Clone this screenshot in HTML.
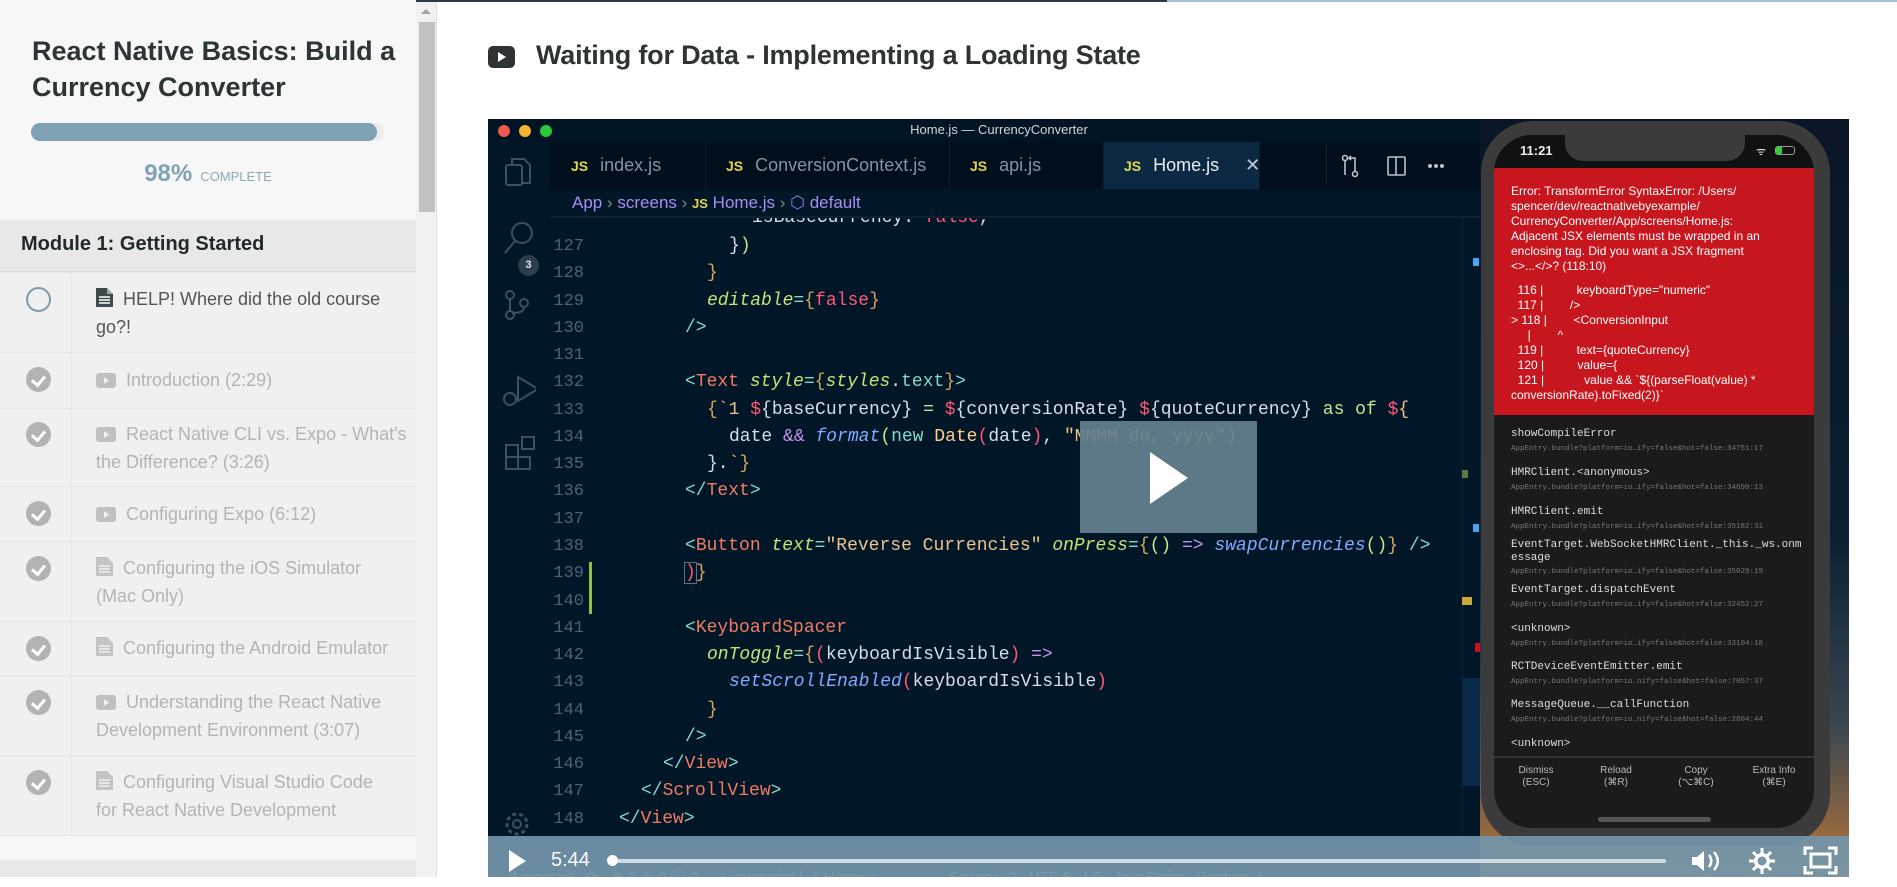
<!DOCTYPE html>
<html><head><meta charset="utf-8">
<style>
*{margin:0;padding:0;box-sizing:border-box}
body{width:1897px;height:877px;overflow:hidden;background:#fff;font-family:"Liberation Sans",sans-serif;position:relative}
.abs{position:absolute}
#side{left:0;top:0;width:416px;height:877px;background:#f7f7f7}
.row{position:absolute;left:0;width:416px;background:#f0f0f0;border-top:1px solid #e6e6e6}
.row .div{position:absolute;left:71px;top:0;bottom:0;width:1px;background:#e6e6e6}
.row .t{position:absolute;left:96px;right:16px;font-size:18px;line-height:28px;color:#b4b4b4}
.chk{position:absolute;left:26px;width:25px;height:25px;border-radius:50%;background:#b3b3b3}
.chk:after{content:"";position:absolute;left:8px;top:6px;width:6px;height:10px;border:solid #fff;border-width:0 3px 3px 0;transform:rotate(40deg)}
.ic{display:inline-block;vertical-align:-2px;margin-right:10px}
.code{position:absolute;left:0;font-family:"Liberation Mono",monospace;font-size:18px;line-height:27px;color:#d6deeb;white-space:pre}
.ln{position:absolute;left:548px;width:36px;text-align:right;font-family:"Liberation Mono",monospace;font-size:17px;color:#4b6479;line-height:27px}
.tg{color:#7fdbca}.tn{color:#f07b62}.at{color:#c5e478;font-style:italic}.br{color:#d9a55b}.fa{color:#ff5874}.fn{color:#82aaff;font-style:italic}.kw{color:#7fdbca}.ty{color:#ffcb8b}.st{color:#ecc48d}.pu{color:#c792ea}.dl{color:#ff5874}.gr{color:#c3e88d}
.tab{position:absolute;top:142px;height:47px;font-size:18px;color:#7f95a6;line-height:47px;padding-left:20px;border-right:1px solid #0b1c2e}
.tab b{color:#e5d34a;font-size:14px;margin-right:12px;font-weight:bold}
.red div{white-space:pre}
.st1{font-family:"Liberation Mono",monospace;font-size:11px;color:#ddd;position:absolute;left:1511px;white-space:nowrap}
.st2{font-family:"Liberation Mono",monospace;font-size:7.5px;color:#777;position:absolute;left:1511px;white-space:nowrap}
</style></head><body>
<div class="abs" style="left:0;top:0;width:1167px;height:2px;background:#2c3b40"></div>
<div class="abs" style="left:1167px;top:0;width:730px;height:2px;background:#a8c0cd"></div>

<div id="side" class="abs">
  <div class="abs" style="left:32px;top:33px;width:385px;font-size:27px;font-weight:bold;line-height:36px;color:#2b3538">React Native Basics: Build a Currency Converter</div>
  <div class="abs" style="left:31px;top:123px;width:353px;height:18px;border-radius:9px;background:#ececec"></div>
  <div class="abs" style="left:31px;top:123px;width:346px;height:18px;border-radius:9px;background:#7ea1b4"></div>
  <div class="abs" style="left:0;top:160px;width:416px;text-align:center;color:#7fa2b5"><span style="font-size:24px;font-weight:bold">98%</span> <span style="font-size:13px;color:#8ea9b8">&nbsp;COMPLETE</span></div>
  <div class="abs" style="left:0;top:220px;width:416px;height:52px;background:#e8e8e8;border-bottom:1px solid #dcdcdc"></div>
  <div class="abs" style="left:21px;top:233px;font-size:20px;font-weight:bold;color:#1f2a2e">Module 1: Getting Started</div>

  <div class="row" style="top:272px;height:80px"><div class="div"></div>
    <div class="abs" style="left:26px;top:14px;width:25px;height:25px;border-radius:50%;border:2px solid #7a9cb0"></div>
    <div class="t" style="top:12px;color:#555"><svg class="ic" width="17" height="19" viewBox="0 0 17 19"><path d="M0 0h11l6 6v13H0z" fill="#3e4a4d"/><path d="M11 0v6h6" fill="#9aa"/><path d="M3 9h11M3 12h11M3 15h11" stroke="#fff" stroke-width="1.5"/></svg>HELP! Where did the old course go?!</div></div>
  <div class="row" style="top:352px;height:56px"><div class="div"></div><div class="chk" style="top:14px"></div>
    <div class="t" style="top:13px"><svg class="ic" width="20" height="15" viewBox="0 0 20 15"><rect width="20" height="15" rx="3" fill="#c0c0c0"/><path d="M8 4l5 3.5L8 11z" fill="#f0f0f0"/></svg>Introduction (2:29)</div></div>
  <div class="row" style="top:408px;height:78px"><div class="div"></div><div class="chk" style="top:13px"></div>
    <div class="t" style="top:11px;right:4px"><svg class="ic" width="20" height="15" viewBox="0 0 20 15"><rect width="20" height="15" rx="3" fill="#c0c0c0"/><path d="M8 4l5 3.5L8 11z" fill="#f0f0f0"/></svg>React Native CLI vs. Expo - What's the Difference? (3:26)</div></div>
  <div class="row" style="top:486px;height:55px"><div class="div"></div><div class="chk" style="top:14px"></div>
    <div class="t" style="top:13px"><svg class="ic" width="20" height="15" viewBox="0 0 20 15"><rect width="20" height="15" rx="3" fill="#c0c0c0"/><path d="M8 4l5 3.5L8 11z" fill="#f0f0f0"/></svg>Configuring Expo (6:12)</div></div>
  <div class="row" style="top:541px;height:80px"><div class="div"></div><div class="chk" style="top:14px"></div>
    <div class="t" style="top:12px"><svg class="ic" width="17" height="19" viewBox="0 0 17 19"><path d="M0 0h11l6 6v13H0z" fill="#c4c4c4"/><path d="M3 9h11M3 12h11M3 15h11" stroke="#f0f0f0" stroke-width="1.5"/></svg>Configuring the iOS Simulator<br>(Mac Only)</div></div>
  <div class="row" style="top:621px;height:54px"><div class="div"></div><div class="chk" style="top:14px"></div>
    <div class="t" style="top:12px;right:0;white-space:nowrap"><svg class="ic" width="17" height="19" viewBox="0 0 17 19"><path d="M0 0h11l6 6v13H0z" fill="#c4c4c4"/><path d="M3 9h11M3 12h11M3 15h11" stroke="#f0f0f0" stroke-width="1.5"/></svg>Configuring the Android Emulator</div></div>
  <div class="row" style="top:675px;height:80px"><div class="div"></div><div class="chk" style="top:14px"></div>
    <div class="t" style="top:12px"><svg class="ic" width="20" height="15" viewBox="0 0 20 15"><rect width="20" height="15" rx="3" fill="#c0c0c0"/><path d="M8 4l5 3.5L8 11z" fill="#f0f0f0"/></svg>Understanding the React Native Development Environment (3:07)</div></div>
  <div class="row" style="top:755px;height:80px"><div class="div"></div><div class="chk" style="top:14px"></div>
    <div class="t" style="top:12px"><svg class="ic" width="17" height="19" viewBox="0 0 17 19"><path d="M0 0h11l6 6v13H0z" fill="#c4c4c4"/><path d="M3 9h11M3 12h11M3 15h11" stroke="#f0f0f0" stroke-width="1.5"/></svg>Configuring Visual Studio Code<br>for React Native Development</div></div>
  <div class="abs" style="left:0;top:835px;width:416px;height:25px;background:#f7f7f7;border-top:1px solid #e6e6e6"></div>
  <div class="abs" style="left:0;top:860px;width:416px;height:17px;background:#e8e8e8"></div>
</div>
<div class="abs" style="left:416px;top:2px;width:21px;height:875px;background:#f1f1f1;border-right:1px solid #dedede"></div>
<div class="abs" style="left:419px;top:22px;width:16px;height:190px;background:#c1c1c1"></div>
<div class="abs" style="left:421px;top:9px;width:0;height:0;border-left:5px solid transparent;border-right:5px solid transparent;border-bottom:5px solid #a3a3a3"></div>

<svg class="abs" style="left:488px;top:46px" width="27" height="22" viewBox="0 0 27 22"><rect width="27" height="22" rx="5" fill="#2e3436"/><path d="M10 6l8 5-8 5z" fill="#fff"/></svg>
<div class="abs" style="left:536px;top:40px;font-size:27px;font-weight:bold;color:#2e3436;letter-spacing:-0.2px">Waiting for Data - Implementing a Loading State</div>

<div class="abs" style="left:488px;top:119px;width:1361px;height:758px;background:linear-gradient(#0a1626 0%,#0d1f33 55%,#3a4650 80%,#b87638 100%);overflow:hidden"></div>
<div class="abs" style="left:488px;top:119px;width:992px;height:758px;background:#011627;overflow:hidden">
  <div class="abs" style="left:0;top:0;width:992px;height:23px;background:#011424"></div>
  <div class="abs" style="left:10px;top:6px;width:12px;height:12px;border-radius:50%;background:#ee5a52"></div>
  <div class="abs" style="left:31px;top:6px;width:12px;height:12px;border-radius:50%;background:#f3b330"></div>
  <div class="abs" style="left:52px;top:6px;width:12px;height:12px;border-radius:50%;background:#2cc73f"></div>
  <div class="abs" style="left:0;top:3px;width:992px;text-align:center;font-size:13px;color:#cfd6dc;padding-left:30px">Home.js — CurrencyConverter</div>
  <svg class="abs" style="left:14px;top:36px" width="34" height="560" viewBox="0 0 34 560" fill="none" stroke="#3b5064" stroke-width="2">
    <rect x="4" y="10" width="16" height="20" rx="2"/><path d="M10 10V4h12l6 6v18H20"/>
    <circle cx="20" cy="78" r="10"/><path d="M13 86L3 98"/>
    <circle cx="8" cy="140" r="4"/><circle cx="8" cy="160" r="4"/><circle cx="22" cy="148" r="4"/><path d="M8 144v12M22 152c0 6-8 6-12 6"/>
    <path d="M16 222l20 12-20 12z"/><circle cx="8" cy="244" r="6"/>
    <rect x="4" y="290" width="12" height="12"/><rect x="16" y="302" width="12" height="12"/><rect x="4" y="302" width="12" height="12"/><rect x="20" y="282" width="12" height="12"/>
  </svg>
  <div class="abs" style="left:30px;top:136px;width:21px;height:21px;border-radius:50%;background:#2d3d4c;color:#e0e6ea;font-size:11px;font-weight:bold;text-align:center;line-height:21px">3</div>
  <svg class="abs" style="left:14px;top:690px" width="30" height="30" viewBox="0 0 30 30"><circle cx="15" cy="15" r="10" fill="none" stroke="#3b5064" stroke-width="3" stroke-dasharray="4 3"/><circle cx="15" cy="15" r="4" fill="none" stroke="#3b5064" stroke-width="2"/></svg>
  <div class="abs" style="left:62px;top:23px;width:930px;height:47px;background:#010f1c"></div>
  <div class="tab" style="left:63px;width:155px;top:23px"><b>JS</b>index.js</div>
  <div class="tab" style="left:218px;width:244px;top:23px"><b>JS</b>ConversionContext.js</div>
  <div class="tab" style="left:462px;width:154px;top:23px"><b>JS</b>api.js</div>
  <div class="tab" style="left:616px;width:156px;top:23px;background:#0b2942;color:#e8edf1"><b>JS</b>Home.js<span style="margin-left:26px;color:#c5ccd2">✕</span></div>
  <div class="abs" style="left:838px;top:25px;width:1px;height:40px;background:#0e2438"></div>
  <svg class="abs" style="left:852px;top:35px" width="110" height="24" viewBox="0 0 110 24" fill="none" stroke="#b8c3cc" stroke-width="1.6"><circle cx="5" cy="4" r="2.5"/><circle cx="15" cy="20" r="2.5"/><path d="M5 7v14M15 17V4H9M11 2l-2 2 2 2"/><rect x="48" y="3" width="17" height="18" rx="1"/><path d="M56 3v18"/><circle cx="90" cy="12" r="1.2" fill="#b8c3cc"/><circle cx="96" cy="12" r="1.2" fill="#b8c3cc"/><circle cx="102" cy="12" r="1.2" fill="#b8c3cc"/></svg>
  <div class="abs" style="left:84px;top:70px;height:27px;font-size:17px;line-height:27px;color:#a48ff0;white-space:nowrap">App <span style="color:#7d8b99">›</span> screens <span style="color:#7d8b99">›</span> <b style="color:#e5d34a;font-size:13px">JS</b> Home.js <span style="color:#7d8b99">›</span> <span style="color:#8b7ee0">⬡</span> default</div>
  <div class="abs" style="left:62px;top:97px;width:930px;height:2px;background:#0f2031"></div>
</div>
<div class="abs" style="left:488px;top:218px;width:992px;height:618px;overflow:hidden">
  <div style="position:absolute;left:-488px;top:-218px;width:1480px;height:900px">
  <div class="ln" style="top:191px;clip-path:inset(14px 0 0 0)">126</div>
  <div class="ln" style="top:233px">127</div><div class="ln" style="top:260px">128</div><div class="ln" style="top:288px">129</div><div class="ln" style="top:315px">130</div><div class="ln" style="top:342px">131</div><div class="ln" style="top:369px">132</div><div class="ln" style="top:397px">133</div><div class="ln" style="top:424px">134</div><div class="ln" style="top:451px">135</div><div class="ln" style="top:478px">136</div><div class="ln" style="top:506px">137</div><div class="ln" style="top:533px">138</div><div class="ln" style="top:560px">139</div><div class="ln" style="top:588px">140</div><div class="ln" style="top:615px">141</div><div class="ln" style="top:642px">142</div><div class="ln" style="top:669px">143</div><div class="ln" style="top:697px">144</div><div class="ln" style="top:724px">145</div><div class="ln" style="top:751px">146</div><div class="ln" style="top:778px">147</div><div class="ln" style="top:806px">148</div>
  <div class="abs" style="left:589px;top:562px;width:3px;height:52px;background:#8bc34a"></div>
  <div class="code" style="left:752px;top:205px">isBaseCurrency: <span class="fa">false</span>,</div>
  <div class="code" style="left:729px;top:233px">}<span class="gr">)</span></div>
  <div class="code" style="left:707px;top:260px"><span class="br">}</span></div>
  <div class="code" style="left:707px;top:288px"><span class="at">editable</span><span class="tg">=</span><span class="br">{</span><span class="fa">false</span><span class="br">}</span></div>
  <div class="code" style="left:685px;top:315px"><span class="tg">/&gt;</span></div>
  <div class="code" style="left:685px;top:369px"><span class="tg">&lt;</span><span class="tn">Text</span> <span class="at">style</span><span class="tg">=</span><span class="br">{</span><span class="at">styles</span>.<span class="kw">text</span><span class="br">}</span><span class="tg">&gt;</span></div>
  <div class="code" style="left:707px;top:397px"><span class="br">{</span><span class="st">`1 </span><span class="dl">$</span>{baseCurrency} <span class="gr">=</span> <span class="dl">$</span>{conversionRate} <span class="dl">$</span>{quoteCurrency} <span class="gr">as of</span> <span class="dl">$</span><span class="st">{</span></div>
  <div class="code" style="left:729px;top:424px">date <span class="pu">&amp;&amp;</span> <span class="fn">format</span><span class="gr">(</span><span class="kw">new</span> <span class="ty">Date</span><span class="fa">(</span>date<span class="fa">)</span>, <span class="st">"MMMM do, yyyy"</span><span class="gr">)</span></div>
  <div class="code" style="left:707px;top:451px">}.<span class="st">`</span><span class="br">}</span></div>
  <div class="code" style="left:685px;top:478px"><span class="tg">&lt;/</span><span class="tn">Text</span><span class="tg">&gt;</span></div>
  <div class="code" style="left:685px;top:533px"><span class="tg">&lt;</span><span class="tn">Button</span> <span class="at">text</span><span class="tg">=</span><span class="st">"Reverse Currencies"</span> <span class="at">onPress</span><span class="tg">=</span><span class="br">{</span><span class="gr">()</span> <span class="pu">=&gt;</span> <span class="fn">swapCurrencies</span><span class="gr">()</span><span class="br">}</span> <span class="tg">/&gt;</span></div>
  <div class="code" style="left:685px;top:560px"><span class="fa" style="outline:1px solid #5a6f84">)</span><span class="br">}</span></div>
  <div class="code" style="left:685px;top:615px"><span class="tg">&lt;</span><span class="tn">KeyboardSpacer</span></div>
  <div class="code" style="left:707px;top:642px"><span class="at">onToggle</span><span class="tg">=</span><span class="br">{</span><span class="fa">(</span>keyboardIsVisible<span class="fa">)</span> <span class="pu">=&gt;</span></div>
  <div class="code" style="left:729px;top:669px"><span class="fn">setScrollEnabled</span><span class="fa">(</span>keyboardIsVisible<span class="fa">)</span></div>
  <div class="code" style="left:707px;top:697px"><span class="br">}</span></div>
  <div class="code" style="left:685px;top:724px"><span class="tg">/&gt;</span></div>
  <div class="code" style="left:663px;top:751px"><span class="tg">&lt;/</span><span class="tn">View</span><span class="tg">&gt;</span></div>
  <div class="code" style="left:641px;top:778px"><span class="tg">&lt;/</span><span class="tn">ScrollView</span><span class="tg">&gt;</span></div>
  <div class="code" style="left:619px;top:806px"><span class="tg">&lt;/</span><span class="tn">View</span><span class="tg">&gt;</span></div>
  <div class="abs" style="left:1462px;top:216px;width:1px;height:620px;background:#0c2236"></div>
  <div class="abs" style="left:1473px;top:258px;width:6px;height:8px;background:#4aa3f0"></div>
  <div class="abs" style="left:1462px;top:470px;width:6px;height:8px;background:#5d7a44"></div>
  <div class="abs" style="left:1473px;top:524px;width:6px;height:8px;background:#4aa3f0"></div>
  <div class="abs" style="left:1462px;top:597px;width:10px;height:8px;background:#c9a93a"></div>
  <div class="abs" style="left:1475px;top:643px;width:5px;height:9px;background:#d01020"></div>
  <div class="abs" style="left:1462px;top:678px;width:18px;height:108px;background:#0a2a4a"></div>
  </div>
</div>
<div class="abs" style="left:1080px;top:421px;width:177px;height:112px;background:rgba(100,128,143,0.93)"></div>
<svg class="abs" style="left:1150px;top:452px" width="40" height="52" viewBox="0 0 40 52"><path d="M0 0l38 26L0 52z" fill="#fff"/></svg>

<div class="abs" style="left:1481px;top:121px;width:349px;height:725px;border-radius:52px;background:#3b3b3b"></div>
<div class="abs" style="left:1494px;top:135px;width:320px;height:693px;border-radius:38px;background:#1b1b1b;overflow:hidden">
  <div class="abs" style="left:0;top:0;width:320px;height:34px;background:#111"></div>
  <div class="abs" style="left:71px;top:-2px;width:180px;height:28px;border-radius:0 0 18px 18px;background:#3b3b3b"></div>
  <div class="abs" style="left:26px;top:8px;color:#eee;font-size:13px;font-weight:bold">11:21</div>
  <div class="abs" style="left:262px;top:9px;color:#eee;font-size:11px">ᯤ</div>
  <div class="abs" style="left:281px;top:11px;width:20px;height:9px;border:1px solid #999;border-radius:3px"><div style="width:6px;height:7px;background:#3c3"></div></div>
  <div class="abs red" style="left:0;top:33px;width:320px;height:247px;background:#c8161f;color:#fff;font-size:12px;line-height:15px;padding:16px 0 0 17px;overflow:hidden">
    <div>Error: TransformError SyntaxError: /Users/</div><div>spencer/dev/reactnativebyexample/</div><div>CurrencyConverter/App/screens/Home.js:</div><div>Adjacent JSX elements must be wrapped in an</div><div>enclosing tag. Did you want a JSX fragment</div><div>&lt;&gt;...&lt;/&gt;? (118:10)</div>
    <div style="margin-top:9px">  116 |          keyboardType="numeric"</div><div>  117 |        /&gt;</div><div>&gt; 118 |        &lt;ConversionInput</div><div>     |        ^</div><div>  119 |          text={quoteCurrency}</div><div>  120 |          value={</div><div>  121 |            value &amp;&amp; `${(parseFloat(value) *</div><div>conversionRate).toFixed(2)}`</div>
  </div>
  <div class="abs" style="left:0;top:621px;width:320px;height:2px;background:#333"></div>
  <div class="abs" style="left:0;top:630px;width:320px;font-size:10px;color:#bbb;text-align:center;line-height:12px">
    <div class="abs" style="left:12px;width:60px">Dismiss<br>(ESC)</div><div class="abs" style="left:92px;width:60px">Reload<br>(⌘R)</div><div class="abs" style="left:172px;width:60px">Copy<br>(⌥⌘C)</div><div class="abs" style="left:250px;width:60px">Extra Info<br>(⌘E)</div>
  </div>
  <div class="abs" style="left:104px;top:682px;width:113px;height:5px;border-radius:3px;background:#555"></div>
</div>
<div class="st1" style="top:428px">showCompileError</div><div class="st2" style="top:445px">AppEntry.bundle?platform=io…ify=false&amp;hot=false:34751:17</div>
<div class="st1" style="top:467px">HMRClient.&lt;anonymous&gt;</div><div class="st2" style="top:484px">AppEntry.bundle?platform=io…ify=false&amp;hot=false:34690:13</div>
<div class="st1" style="top:506px">HMRClient.emit</div><div class="st2" style="top:523px">AppEntry.bundle?platform=io…ify=false&amp;hot=false:35182:31</div>
<div class="st1" style="top:539px;line-height:13px">EventTarget.WebSocketHMRClient._this._ws.onm<br>essage</div><div class="st2" style="top:568px">AppEntry.bundle?platform=io…ify=false&amp;hot=false:35029:19</div>
<div class="st1" style="top:584px">EventTarget.dispatchEvent</div><div class="st2" style="top:601px">AppEntry.bundle?platform=io…ify=false&amp;hot=false:32452:27</div>
<div class="st1" style="top:623px">&lt;unknown&gt;</div><div class="st2" style="top:640px">AppEntry.bundle?platform=io…ify=false&amp;hot=false:33104:18</div>
<div class="st1" style="top:661px">RCTDeviceEventEmitter.emit</div><div class="st2" style="top:678px">AppEntry.bundle?platform=io…nify=false&amp;hot=false:7057:37</div>
<div class="st1" style="top:699px">MessageQueue.__callFunction</div><div class="st2" style="top:716px">AppEntry.bundle?platform=io…nify=false&amp;hot=false:2804:44</div>
<div class="st1" style="top:738px">&lt;unknown&gt;</div>

<div class="abs" style="left:488px;top:836px;width:1361px;height:41px;background:rgba(115,150,170,0.92)"></div>
<div class="abs" style="left:488px;top:866px;width:1000px;font-size:15px;color:rgba(255,255,255,0.12);white-space:pre">   ⎇ master*   ⟳   ⊗ 2 ⚠ 0 ⓘ 2    ✓ javascript | ✓ Home.js                 Spaces: 2   UTF-8   LF   JavaScript   Prettier: ⚠</div>
<svg class="abs" style="left:509px;top:850px" width="18" height="22" viewBox="0 0 18 22"><path d="M0 0l17 11L0 22z" fill="#fff"/></svg>
<div class="abs" style="left:551px;top:849px;font-size:20px;color:#fff">5:44</div>
<div class="abs" style="left:612px;top:859px;width:1054px;height:4px;border-radius:2px;background:rgba(230,238,242,0.8)"></div>
<div class="abs" style="left:607px;top:855px;width:11px;height:11px;border-radius:50%;background:#fff"></div>
<svg class="abs" style="left:1690px;top:849px" width="32" height="24" viewBox="0 0 32 24"><path d="M2 8h5l7-6v20l-7-6H2z" fill="#fff"/><path d="M19 6c3 4 3 8 0 12M24 3c5 6 5 12 0 18" stroke="#fff" stroke-width="2.5" fill="none"/></svg>
<svg class="abs" style="left:1748px;top:847px" width="28" height="28" viewBox="0 0 28 28"><g stroke="#fff" stroke-width="3"><path d="M14 1v26M1 14h26M5 5l18 18M23 5L5 23"/></g><circle cx="14" cy="14" r="8" fill="#fff"/><circle cx="14" cy="14" r="4.5" fill="#7696aa"/></svg>
<svg class="abs" style="left:1803px;top:846px" width="35" height="29" viewBox="0 0 35 29" fill="none" stroke="#fff" stroke-width="3"><path d="M2 9V2h8M25 2h8v7M33 20v7h-8M10 27H2v-7"/><rect x="8" y="8" width="19" height="13"/></svg>
</body></html>
